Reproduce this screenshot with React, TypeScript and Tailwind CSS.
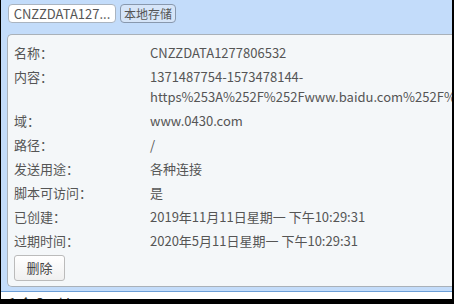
// Cookie 详情面板（截图复刻）

const rows: { label: string; value: string }[] = [
  { label: '名称：', value: 'CNZZDATA1277806532' },
  {
    label: '内容：',
    value: '1371487754-1573478144-https%253A%252F%252Fwww.baidu.com%252F%252Fwww.0430.com',
  },
  { label: '域：', value: 'www.0430.com' },
  { label: '路径：', value: '/' },
  { label: '发送用途：', value: '各种连接' },
  { label: '脚本可访问：', value: '是' },
  { label: '已创建：', value: '2019年11月11日星期一 下午10:29:31' },
  { label: '过期时间：', value: '2020年5月11日星期一 下午10:29:31' },
];

export default function App() {
  return (
    <div
      className="w-[454px] h-[304px] bg-black pl-px pr-[2px] pb-[5px] overflow-hidden text-[13px] text-[#555]"
      style={{ fontFamily: '"Noto Sans CJK SC", "Noto Sans", sans-serif' }}
    >
      <div className="h-full flex flex-col bg-[#c3dcfa]">
        {/* タブ */}
        <div className="h-[35px] flex items-start gap-[4px] pl-[7px] pt-[4px]">
          <div className="h-[19px] w-[108px] flex items-center justify-center bg-white border border-[#aab4c0] rounded-[4px] leading-none">
            CNZZDATA127...
          </div>
          <div className="h-[19px] px-[3px] flex items-center justify-center bg-[#d6e5f8] border border-[#8898ad] rounded-[4px] text-[12px] leading-none">
            本地存储
          </div>
        </div>

        {/* 詳細パネル */}
        <div className="pl-[6px]">
          <div className="-mt-px h-[253px] bg-[#f4f7f9] border-t border-l border-b border-[#a9b1b9] rounded-l-[5px] pl-[6px] pt-[6px] overflow-hidden">
            {rows.map((r) => (
              <div key={r.label} className="flex py-[2px] leading-[20px]">
                <div className="w-[136px] shrink-0">{r.label}</div>
                <div className="w-[300px] shrink-0">
                  {r.label === '内容：' ? (
                    <>
                      <div>1371487754-1573478144-</div>
                      <div className="whitespace-nowrap">https%253A%252F%252Fwww.baidu.com%252F%252F</div>
                    </>
                  ) : (
                    r.value
                  )}
                </div>
              </div>
            ))}
            <button className="mt-[2px] h-[26px] w-[51px] bg-gradient-to-b from-white to-[#f0f0f0] border border-[#bbb] rounded-[3px] text-[#444]">
              删除
            </button>
          </div>
        </div>

        <div className="h-[4px]" />
        <div className="h-px bg-[#6c9fd8]" />
        <div className="flex-1 bg-white pl-[8px] overflow-hidden leading-[14px] pt-[4px] text-[#333]">
          1 个 Cookie
        </div>
      </div>
    </div>
  );
}
